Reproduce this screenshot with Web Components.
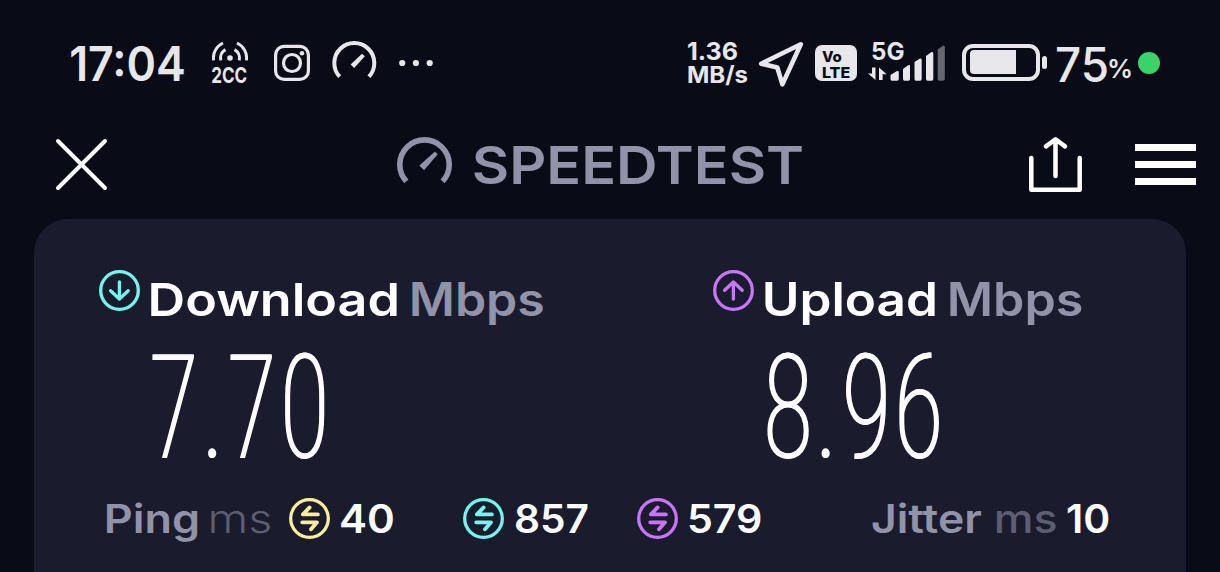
<!DOCTYPE html>
<html lang="en">
<head>
<meta charset="utf-8">
<title>Speedtest</title>
<style>
  body {
    margin: 0;
    width: 1220px;
    height: 572px;
    overflow: hidden;
    background: #090b17;
    color: #fff;
    font-family: Inter, "Liberation Sans", sans-serif;
  }
</style>
</head>
<body>
<speedtest-screen></speedtest-screen>

<script>
const measure = document.createElement("canvas").getContext("2d");

// One line of text, sized by cap height and by the width of its ink.
// "at" places every glyph by its own left edge instead.
class FitLabel extends HTMLElement {
  constructor() {
    super();
    this.attachShadow({ mode: "open" });
  }

  connectedCallback() {
    const text = this.textContent.trim();
    const width = Number(this.getAttribute("width"));
    const cap = Number(this.getAttribute("cap"));
    const weight = this.getAttribute("weight") || "600";
    const family = this.getAttribute("family") || "Inter";
    const at = this.getAttribute("at");
    const glyph = Number(this.getAttribute("glyph"));
    const stroke = Number(this.getAttribute("stroke") || 0);
    const stretch = at ? "condensed" : "normal";

    measure.font = `${stretch} ${weight} 100px ${family}, "Liberation Sans", sans-serif`;
    const size = (cap / measure.measureText("H").actualBoundingBoxAscent) * 100;
    measure.font = `${stretch} ${weight} ${size}px ${family}, "Liberation Sans", sans-serif`;
    const ink = (s) => {
      const m = measure.measureText(s);
      return { left: -m.actualBoundingBoxLeft, right: m.actualBoundingBoxRight };
    };

    const box = ink(text);
    let scale = width / (box.right - box.left);
    let x = -box.left;
    if (at) {
      const zero = ink("0");
      scale = glyph / (zero.right - zero.left);
      x = at.split(" ").map((p, i) => Number(p) / scale - ink(text[i]).left).join(" ");
    }

    this.shadowRoot.innerHTML = `
      <style>
        :host { display: block; flex: none; width: ${width}px; height: ${cap}px; }
        svg { display: block; overflow: visible; ${at ? "filter: drop-shadow(1.5px 0 0 #fff);" : ""} }
        text {
          font-family: ${family}, "Liberation Sans", sans-serif;
          font-size: ${size}px;
          font-weight: ${weight};
          font-stretch: ${stretch};
          fill: currentColor;
          stroke: currentColor;
          stroke-width: ${stroke};
        }
      </style>
      <svg width="${width}" height="${cap}">
        <text x="${x}" y="0" transform="translate(0 ${cap}) scale(${scale} 1)">${text}</text>
      </svg>
    `;
  }
}
customElements.define("fit-label", FitLabel);

const RING_GLYPHS = {
  down: '<path d="M20.4 12V28.5M11.6 20.7L20.4 29L29.2 20.7"/>',
  up: '<path d="M20.4 29V12.5M11.6 20.3L20.4 12L29.2 20.3"/>',
  swap: '<path stroke-width="3.8" d="M28.9 16.4H13.9L20.6 9.4M13.2 24.3H28L22 31.3"/>',
};

class RingIcon extends HTMLElement {
  constructor() {
    super();
    this.attachShadow({ mode: "open" });
  }

  connectedCallback() {
    this.shadowRoot.innerHTML = `
      <style>
        :host { display: block; flex: none; width: 41px; height: 41px; }
        svg { display: block; fill: none; stroke: currentColor; stroke-width: 3.3; stroke-linecap: round; stroke-linejoin: round; }
      </style>
      <svg width="41" height="41" viewBox="0 0 41 41">
        <circle cx="20.5" cy="20.5" r="18.8"/>
        ${RING_GLYPHS[this.getAttribute("glyph")]}
      </svg>
    `;
  }
}
customElements.define("ring-icon", RingIcon);

class PhoneStatus extends HTMLElement {
  constructor() {
    super();
    this.attachShadow({ mode: "open" });
  }

  connectedCallback() {
    this.shadowRoot.innerHTML = `
      <style>
        :host { display: flex; align-items: flex-start; height: 95px; padding-top: 41px; box-sizing: border-box; color: #e7e6ea; }
        svg { display: block; flex: none; fill: currentColor; }
        .line { fill: none; stroke: currentColor; stroke-linecap: round; stroke-linejoin: round; }
        .time { margin: 5px 0 0 71px; }
        .carrier { margin-left: 28px; width: 36px; display: grid; gap: 6px; }
        .icons { margin-left: 26px; }
        .rate { margin: 1px 0 0 255px; display: grid; gap: 6px; }
        .nav { margin-left: 10px; }
        .volte {
          margin: 4px 0 0 11px; width: 42px; height: 36px; box-sizing: border-box; padding: 6px 0 0 7px;
          border-radius: 7px; background: #e7e6ea; color: #0a0c18; display: grid; align-content: start; gap: 5px;
        }
        .cell { margin: 1px 0 0 11px; width: 77px; }
        .cell fit-label { margin-left: 4px; height: 18px; }
        .cell svg { margin-top: -15px; }
        .battery { margin: 3px 0 0 17px; }
        .level { margin: 5.5px 0 0 10px; }
        .percent { margin: 18px 0 0 2px; }
        .dot { margin: 11px 0 0 7px; width: 22px; height: 22px; border-radius: 50%; background: #38d46a; }
      </style>
      <fit-label class="time" width="113" cap="35" weight="600">17:04</fit-label>
      <div class="carrier">
        <svg width="36" height="20" viewBox="212 41 36 20">
          <circle cx="230" cy="58" r="2.8"/>
          <g class="line" stroke-width="3" style="stroke-linecap: butt">
            <path d="M213.6 60.4A16.5 16.5 0 0 1 223 43M246.4 60.4A16.5 16.5 0 0 0 237 43"/>
            <path d="M220.8 60.4A9.8 9.8 0 0 1 225.5 49.6M239.2 60.4A9.8 9.8 0 0 0 234.5 49.6"/>
          </g>
        </svg>
        <fit-label width="35" cap="16" weight="700">2CC</fit-label>
      </div>
      <svg class="icons" width="159" height="42" viewBox="274 41 159 42">
        <g class="line" stroke-width="3.2">
          <rect x="275.6" y="46.4" width="32.8" height="33" rx="8.5"/>
          <circle cx="292" cy="63" r="8.5"/>
        </g>
        <circle cx="302" cy="53.2" r="2.3"/>
        <path class="line" stroke-width="4" style="stroke-linecap: butt" d="M339.7 76.7A20 20 0 1 1 368.9 76.7"/>
        <path d="M350.6 64.6L362 53.8L364.8 56.2L354.2 68Z"/>
        <circle cx="402.2" cy="63" r="3.1"/><circle cx="415.9" cy="63" r="3.1"/><circle cx="429.7" cy="63" r="3.1"/>
      </svg>
      <div class="rate">
        <fit-label width="49" cap="18" weight="700">1.36</fit-label>
        <fit-label width="60" cap="17" weight="700">MB/s</fit-label>
      </div>
      <svg class="nav" width="46" height="46" viewBox="758 41 46 46">
        <path class="line" stroke-width="4.6" d="M800.8 44.3L761.2 63.7L777.3 67.5L782.4 84.4Z"/>
      </svg>
      <div class="volte">
        <fit-label width="20" cap="10.5" weight="800">Vo</fit-label>
        <fit-label width="28" cap="11" weight="800">LTE</fit-label>
      </div>
      <div class="cell">
        <fit-label width="32" cap="18" weight="700">5G</fit-label>
        <svg width="77" height="36" viewBox="868 45 77 36">
          <path d="M872 67.5H875.5V80L868 73.6H872ZM879 67.5L886.7 74.2H882.6V80H879Z"/>
          <path d="M890.5 75L897 71Q898.8 70.5 898.8 72V79Q898.8 80.7 897 80.7H892Q890.5 80.7 890.5 79Z"/>
          <path d="M903 69L908.5 65Q910 64.5 910 66V79Q910 80.7 908.5 80.7H904.5Q903 80.7 903 79Z"/>
          <path d="M914.5 62L920 58.5Q921.7 58 921.7 60V79Q921.7 80.7 920 80.7H916Q914.5 80.7 914.5 79Z"/>
          <path d="M926 56L931.5 52Q933.3 51.5 933.3 53.5V79Q933.3 80.7 931.5 80.7H927.5Q926 80.7 926 79Z"/>
          <path fill="#66666f" d="M937.7 49.5L943 45.7Q944.8 45.2 944.8 47.2V79Q944.8 80.7 943 80.7H939.5Q937.7 80.7 937.7 79Z"/>
        </svg>
      </div>
      <svg class="battery" width="85" height="37" viewBox="962 44 85 37">
        <rect class="line" stroke-width="4" x="964" y="46" width="74" height="33" rx="9"/>
        <path d="M974 50H1016V74H974Q970 74 970 70V54Q970 50 974 50Z"/>
        <rect x="1042" y="56" width="5" height="13" rx="2.5"/>
      </svg>
      <fit-label class="level" width="50" cap="34.5" weight="500">75</fit-label>
      <fit-label class="percent" width="22" cap="19" weight="600">%</fit-label>
      <div class="dot"></div>
    `;
  }
}
customElements.define("phone-status", PhoneStatus);

class AppHeader extends HTMLElement {
  constructor() {
    super();
    this.attachShadow({ mode: "open" });
  }

  connectedCallback() {
    this.shadowRoot.innerHTML = `
      <style>
        :host { display: flex; align-items: flex-start; height: 124px; padding-top: 41px; box-sizing: border-box; }
        svg { display: block; flex: none; fill: none; stroke: currentColor; stroke-width: 4.5; stroke-linecap: round; stroke-linejoin: round; }
        .close { margin: 2px 0 0 55px; stroke-width: 4; }
        .gauge { margin: 1px 0 0 289px; color: #9193a8; stroke-width: 5.6; stroke-linecap: butt; }
        .title { margin: 9px 0 0 22px; color: #9193a8; }
        .share { margin: 0 0 0 226px; }
        .menu { margin: 8px 0 0 52px; width: 61px; display: grid; gap: 10px; }
        .menu i { height: 7px; background: #fff; }
      </style>
      <svg class="close" width="53" height="53" viewBox="55 138 53 53">
        <path d="M58 141L105 188M105 141L58 188"/>
      </svg>
      <svg class="gauge" width="55" height="48" viewBox="397 137 55 48">
        <path d="M406.4 181.4A24.7 24.7 0 1 1 442.6 181.4"/>
        <path fill="currentColor" stroke="none" d="M419.3 165.6L435 151.4L437.7 154.2L424 170.2Z"/>
      </svg>
      <fit-label class="title" width="328" cap="38.5" weight="600">SPEEDTEST</fit-label>
      <svg class="share" width="55" height="56" viewBox="1028 136 55 56">
        <path d="M1031.3 158V189.7H1079.7V158M1055.5 140V176M1046 146.4L1055.5 139.2L1065 146.4"/>
      </svg>
      <div class="menu"><i></i><i></i><i></i></div>
    `;
  }
}
customElements.define("app-header", AppHeader);

// Direction ring, name with its unit, and the large reading below
class SpeedResult extends HTMLElement {
  constructor() {
    super();
    this.attachShadow({ mode: "open" });
  }

  connectedCallback() {
    const color = this.getAttribute("color");
    this.shadowRoot.innerHTML = `
      <style>
        :host { display: block; }
        .name { display: flex; align-items: flex-start; height: 85px; }
        ring-icon { color: ${color}; margin-right: 11px; }
        ::slotted(fit-label) { display: block; }
      </style>
      <div class="name">
        <ring-icon glyph="${this.getAttribute("glyph")}"></ring-icon>
        <slot name="name"></slot>
        <slot name="unit"></slot>
      </div>
      <slot></slot>
    `;
  }
}
customElements.define("speed-result", SpeedResult);

class ResultCard extends HTMLElement {
  constructor() {
    super();
    this.attachShadow({ mode: "open" });
  }

  connectedCallback() {
    this.shadowRoot.innerHTML = `
      <style>
        :host {
          display: block; margin: 0 34px; height: 353px; box-sizing: border-box; padding: 51px 0 0 65px;
          background: #1b1b2e; border-radius: 34px 34px 0 0;
        }
        .speeds { display: flex; height: 228px; }
        .speeds > :first-child { width: 614px; }
        .name { margin-top: 12px; }
        .unit { margin: 12px 0 0 15px; color: #9193a8; }
        .latency { display: flex; align-items: flex-start; }
        .latency fit-label { margin-top: 6px; }
        .muted { color: #9193a8; }
        .faint { color: #5d5e72; }
      </style>
      <div class="speeds">
        <speed-result glyph="down" color="#70f9ee">
          <fit-label class="name" slot="name" width="246" cap="33.5">Download</fit-label>
          <fit-label class="unit" slot="unit" width="131.5" cap="33.5">Mbps</fit-label>
          <fit-label style="margin-left: 53px" width="173" cap="101.5" family="Roboto" weight="100" glyph="37.5" stroke="1.9" at="0.5 56.5 78.5 133.5">7.70</fit-label>
        </speed-result>
        <speed-result glyph="up" color="#c974fa">
          <fit-label class="name" slot="name" width="170" cap="33.5">Upload</fit-label>
          <fit-label class="unit" slot="unit" width="132" cap="33.5">Mbps</fit-label>
          <fit-label style="margin-left: 54px" width="172" cap="101.5" family="Roboto" weight="100" glyph="37.5" stroke="1.9" at="1 55 79.5 132.5">8.96</fit-label>
        </speed-result>
      </div>
      <div class="latency">
        <fit-label class="muted" style="margin-left: 6.5px" width="92" cap="29">Ping</fit-label>
        <fit-label class="faint" style="margin-left: 13.5px" width="59.5" cap="29" weight="300">ms</fit-label>
        <ring-icon glyph="swap" style="margin-left: 18px; color: #fbee96"></ring-icon>
        <fit-label style="margin-left: 11.5px" width="52.5" cap="29">40</fit-label>
        <ring-icon glyph="swap" style="margin-left: 69px; color: #70f9ee"></ring-icon>
        <fit-label style="margin-left: 11px" width="73" cap="29">857</fit-label>
        <ring-icon glyph="swap" style="margin-left: 49px; color: #c974fa"></ring-icon>
        <fit-label style="margin-left: 11px" width="72" cap="29">579</fit-label>
        <fit-label class="muted" style="margin-left: 111px" width="109" cap="29">Jitter</fit-label>
        <fit-label class="faint" style="margin-left: 15px" width="60" cap="29" weight="500">ms</fit-label>
        <fit-label style="margin-left: 11px" width="42" cap="29">10</fit-label>
      </div>
    `;
  }
}
customElements.define("result-card", ResultCard);

class SpeedtestScreen extends HTMLElement {
  constructor() {
    super();
    this.attachShadow({ mode: "open" });
  }

  connectedCallback() {
    this.shadowRoot.innerHTML = `
      <style>:host { display: block; }</style>
      <phone-status></phone-status>
      <app-header></app-header>
      <result-card></result-card>
    `;
  }
}
customElements.define("speedtest-screen", SpeedtestScreen);
</script>
</body>
</html>
